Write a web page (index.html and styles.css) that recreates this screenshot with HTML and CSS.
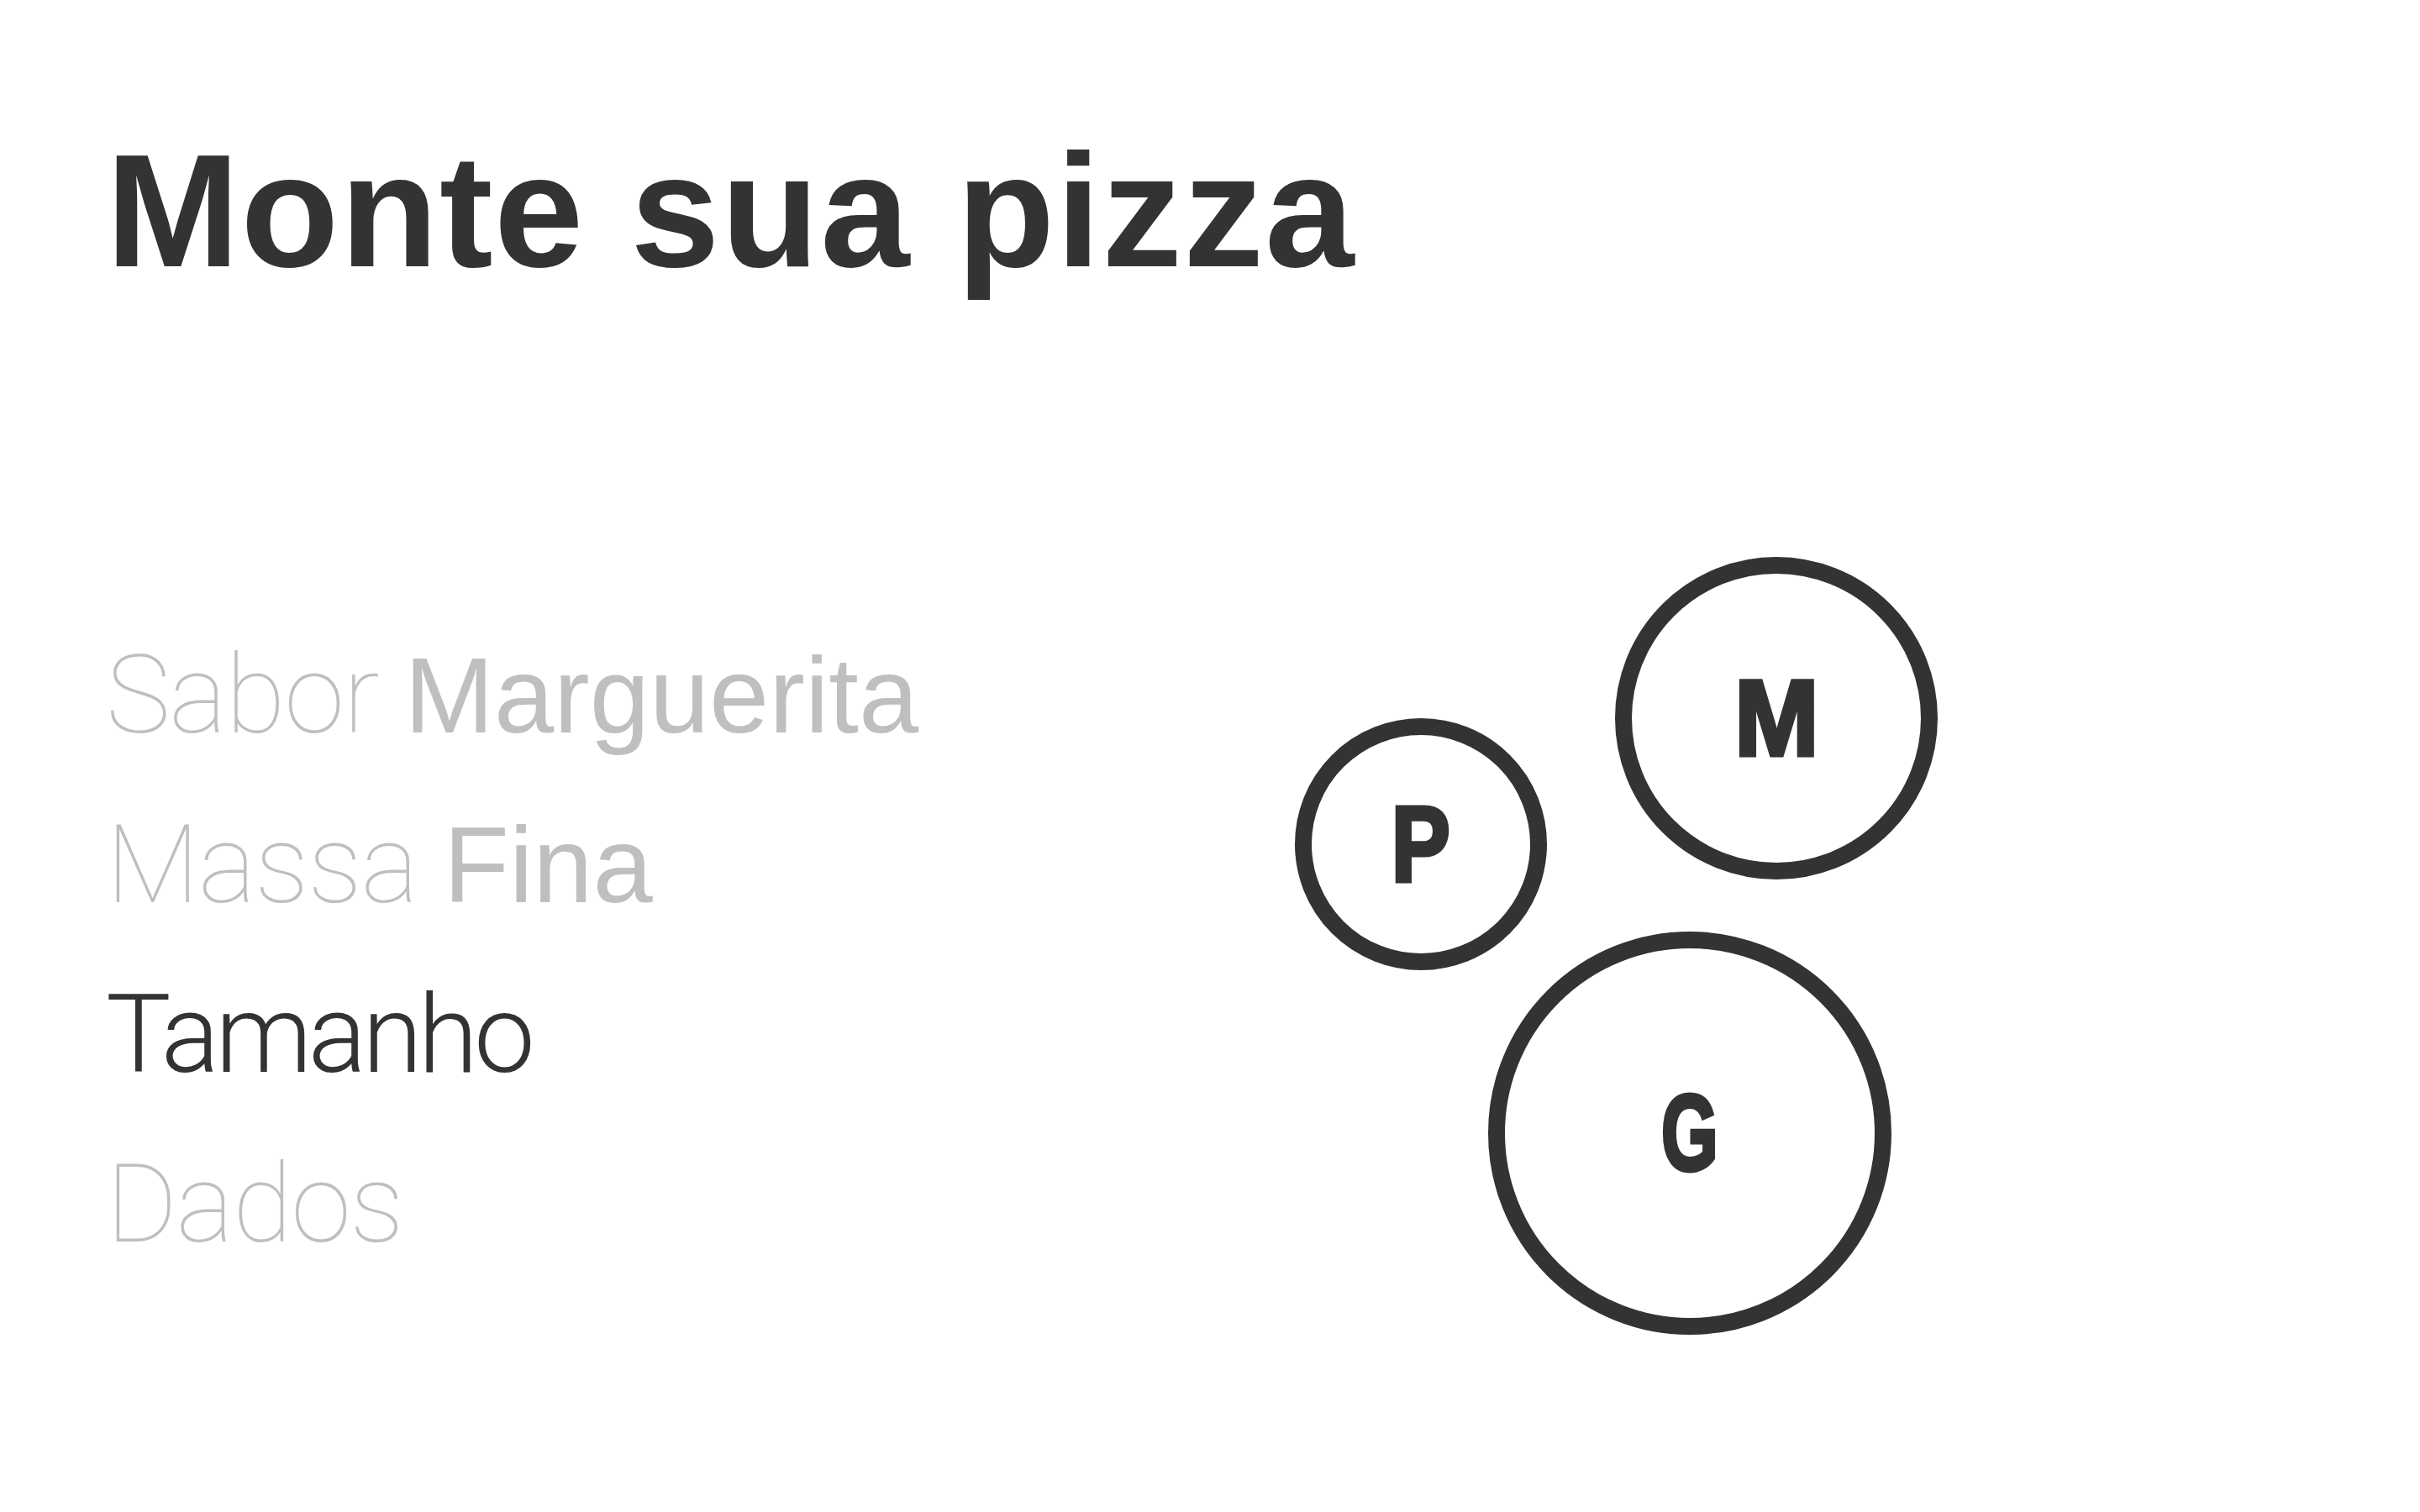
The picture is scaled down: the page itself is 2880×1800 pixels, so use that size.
FILE: index.html
```html
<!DOCTYPE html>
<html lang="pt-BR">
<head>
<meta charset="utf-8">
<title>Monte sua pizza</title>
<link rel="stylesheet" href="styles.css">
</head>
<body>
<main class="page">
  <h1 class="title">Monte sua pizza</h1>
  <section class="builder">
    <ol class="steps">
      <li class="step step--done"><span class="step-label">Sabor</span> <span class="step-value">Marguerita</span></li>
      <li class="step step--done"><span class="step-label">Massa</span> <span class="step-value">Fina</span></li>
      <li class="step step--active"><span class="step-label">Tamanho</span></li>
      <li class="step"><span class="step-label">Dados</span></li>
    </ol>
    <div class="size-picker">
      <button class="size size--p" type="button"><span class="size-letter size-letter--p">P</span></button>
      <button class="size size--m" type="button"><span class="size-letter size-letter--m">M</span></button>
      <button class="size size--g" type="button"><span class="size-letter size-letter--g">G</span></button>
    </div>
  </section>
</main>
</body>
</html>
```
FILE: styles.css
```css
html, body {
  margin: 0;
  padding: 0;
  background: #ffffff;
}

.page {
  padding: 155px 0 0 126px;
  color: #333333;
}

.title {
  margin: 0;
  font-family: "Liberation Sans", Arial, sans-serif;
  font-weight: 700;
  font-size: 191px;
  line-height: 1;
  color: #333333;
  letter-spacing: 1.5px;
}

.builder {
  display: flex;
  align-items: flex-start;
  margin-top: 317px;
}

.steps {
  list-style: none;
  margin: 0;
  padding: 64px 0 0 0;
  width: 1415px;
  flex: none;
}

.step {
  height: 202px;
  line-height: 202px;
  white-space: nowrap;
  color: #bfbfbf;
  font-family: Roboto, "Liberation Sans", sans-serif;
  font-weight: 100;
  font-size: 130px;
}

.step-label {
  font-family: Roboto, "Liberation Sans", sans-serif;
  font-weight: 100;
  font-size: 130px;
  letter-spacing: -1.5px;
}

.step-value {
  font-family: "Liberation Sans", Arial, sans-serif;
  font-weight: 400;
  font-size: 128px;
  letter-spacing: 0;
}

.step--active {
  color: #333333;
}

.step--active .step-label {
  font-weight: 300;
  letter-spacing: -5px;
}

.size-picker {
  position: relative;
  flex: none;
  width: 765px;
  height: 927px;
}

.size {
  position: absolute;
  box-sizing: border-box;
  display: flex;
  align-items: center;
  justify-content: center;
  padding: 0;
  margin: 0;
  background: #ffffff;
  border: 20px solid #333333;
  border-radius: 50%;
  cursor: pointer;
}

.size--p {
  left: 0;
  top: 192px;
  width: 300px;
  height: 300px;
}

.size--m {
  left: 381px;
  top: 0;
  width: 384px;
  height: 384px;
}

.size--g {
  left: 230px;
  top: 446px;
  width: 480px;
  height: 480px;
}

.size-letter {
  display: inline-block;
  font-family: "Liberation Sans", Arial, sans-serif;
  font-weight: 700;
  font-size: 128px;
  line-height: 1;
  color: #333333;
  -webkit-text-stroke: 5px #333333;
}

.size-letter--p {
  transform: scaleX(0.82);
}

.size-letter--m {
  transform: scaleX(0.94);
}

.size-letter--g {
  transform: scaleX(0.68);
}
```
